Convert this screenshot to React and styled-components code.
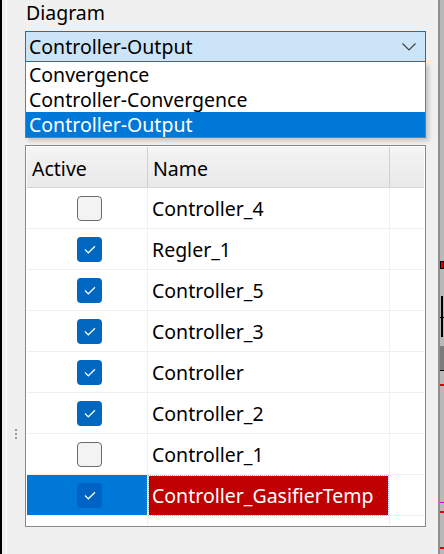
import React from 'react'
import styled, { createGlobalStyle } from 'styled-components'

const GlobalStyle = createGlobalStyle`
  html, body {
    margin: 0;
    padding: 0;
    background: #f0f0f0;
    overflow: hidden;
  }
  body {
    font-family: "Noto Sans", "Open Sans", sans-serif;
    font-size: 19.5px;
    color: #000;
  }
`

const Window = styled.div`
  display: flex;
  width: 444px;
  height: 554px;
`

const LeftRail = styled.div`
  width: 20px;
  flex-shrink: 0;
  border-left: 2px solid #000;
  box-sizing: border-box;
  display: flex;
  flex-direction: column;
  align-items: center;
  padding: 429px 0 0 2px;
  box-shadow: inset 4px 0 0 #f0f0f0, inset 5px 0 0 #fbfbfb;
`

const Grip = styled.div`
  display: flex;
  flex-direction: column;
  gap: 2px;
  margin-left: 8px;

  span {
    width: 2px;
    height: 2px;
    background: #9a9a9a;
  }
`

const Panel = styled.div`
  position: relative;
  width: 401px;
  margin-left: 5px;
  flex-shrink: 0;
  display: flex;
  flex-direction: column;
`

const Label = styled.div`
  height: 31px;
  line-height: 26px;
  padding-left: 1px;
`

const Combo = styled.div`
  height: 31px;
  box-sizing: border-box;
  border: 1px solid #0078d7;
  background: #cce4f7;
  display: flex;
  align-items: center;
  justify-content: space-between;
  padding: 0 9px 0 3px;
`

const Popup = styled.div`
  position: absolute;
  top: 62px;
  left: 0;
  width: 401px;
  box-sizing: border-box;
  background: #fff;
  border: 1px solid #7a7a7a;
  border-top: none;
  box-shadow: 3px 3px 4px rgba(0, 0, 0, 0.18);
  z-index: 2;
`

const Option = styled.div`
  height: 25px;
  line-height: 25px;
  padding-left: 3px;
  background: ${p => (p.$selected ? '#0078d7' : '#fff')};
  color: ${p => (p.$selected ? '#fff' : '#000')};
`

const Grid = styled.div`
  margin-top: 83px;
  height: 382px;
  box-sizing: border-box;
  border: 1px solid #828790;
  padding: 1px;
  background: #fff;
  display: flex;
  flex-direction: column;
`

const Row = styled.div`
  display: flex;
  height: ${p => (p.$fill ? 'auto' : '41px')};
  flex: ${p => (p.$fill ? '1' : 'none')};
  box-sizing: border-box;
  border-bottom: ${p => (p.$fill ? 'none' : '1px solid #f0f0f0')};
`

const HeaderRow = styled.div`
  display: flex;
  height: 41px;
  box-sizing: border-box;
  border-bottom: 1px solid #d5d5d5;
  background: linear-gradient(#f4f4f4, #e9e9e9);
`

const HeadCell = styled.div`
  width: ${p => p.$w}px;
  flex: ${p => (p.$w ? 'none' : '1')};
  box-sizing: border-box;
  border-right: ${p => (p.$last ? 'none' : '1px solid #d0d0d0')};
  display: flex;
  align-items: center;
  padding-left: 5px;
  padding-top: 2px;
`

const ActiveCell = styled.div`
  width: 121px;
  flex: none;
  box-sizing: border-box;
  border-right: 1px solid #f0f0f0;
  background: ${p => (p.$selected ? '#0078d7' : 'transparent')};
  display: flex;
  align-items: center;
  justify-content: center;
  padding-left: 5px;
`

const NameCell = styled.div`
  width: 242px;
  flex: none;
  box-sizing: border-box;
  border-right: 1px solid #f0f0f0;
  display: flex;
  align-items: center;
  padding: ${p => (p.$selected ? '1px 1px 0 1px' : '0 0 0 4px')};
`

const Editor = styled.div`
  flex: 1;
  align-self: stretch;
  background: #c00000;
  color: #fff;
  outline: 1px dotted #8fc3ee;
  outline-offset: 0;
  display: flex;
  align-items: center;
  padding-left: 3px;
`

const FillCell = styled.div`
  flex: 1;
`

const Box = styled.div`
  width: 25px;
  height: 25px;
  box-sizing: border-box;
  border-radius: 4px;
  display: flex;
  align-items: center;
  justify-content: center;
  border: ${p => (p.$checked ? 'none' : '1.5px solid #6b6b6b')};
  background: ${p => (p.$checked ? (p.$selected ? '#0062c4' : '#0067c0') : '#f3f3f3')};
`

const Gutter = styled.div`
  width: 12px;
  flex-shrink: 0;
`

const Splitter = styled.div`
  width: 2px;
  flex-shrink: 0;
  background: #8e8e8e;
`

const Canvas = styled.div`
  position: relative;
  flex: 1;
  background: #b9b9b9;
`

const Mark = styled.div`
  position: absolute;
  left: 0;
  right: 0;
  box-sizing: border-box;
`

const Chevron = () => (
  <svg width="14" height="8" viewBox="0 0 14 8">
    <path d="M0.5 0.5 L7 7 L13.5 0.5" fill="none" stroke="#3c3c3c" strokeWidth="1.1" />
  </svg>
)

const Check = () => (
  <svg width="12" height="9" viewBox="0 0 12 9">
    <path d="M1 4.5 L4.3 7.8 L11 1.2" fill="none" stroke="#fff" strokeWidth="1.2" />
  </svg>
)

const options = ['Convergence', 'Controller-Convergence', 'Controller-Output']

const controllers = [
  { name: 'Controller_4', active: false },
  { name: 'Regler_1', active: true },
  { name: 'Controller_5', active: true },
  { name: 'Controller_3', active: true },
  { name: 'Controller', active: true },
  { name: 'Controller_2', active: true },
  { name: 'Controller_1', active: false },
  { name: 'Controller_GasifierTemp', active: true, selected: true },
]

export default function App() {
  return (
    <>
      <GlobalStyle />
      <Window>
        <LeftRail>
          <Grip>
            <span />
            <span />
            <span />
          </Grip>
        </LeftRail>

        <Panel>
          <Label>Diagram</Label>
          <Combo>
            <span>Controller-Output</span>
            <Chevron />
          </Combo>
          <Popup>
            {options.map(o => (
              <Option key={o} $selected={o === 'Controller-Output'}>
                {o}
              </Option>
            ))}
          </Popup>

          <Grid>
            <HeaderRow>
              <HeadCell $w={121}>Active</HeadCell>
              <HeadCell $w={242}>Name</HeadCell>
              <HeadCell $last />
            </HeaderRow>
            {controllers.map(c => (
              <Row key={c.name}>
                <ActiveCell $selected={c.selected}>
                  <Box $checked={c.active} $selected={c.selected}>
                    {c.active && <Check />}
                  </Box>
                </ActiveCell>
                <NameCell $selected={c.selected}>
                  {c.selected ? <Editor>{c.name}</Editor> : c.name}
                </NameCell>
                <FillCell />
              </Row>
            ))}
            <Row $fill>
              <ActiveCell />
              <NameCell />
              <FillCell />
            </Row>
          </Grid>
        </Panel>

        <Gutter />
        <Splitter />
        <Canvas>
          <Mark style={{ top: 264, height: 1, background: '#e000e0' }} />
          <Mark style={{ top: 261, height: 8, background: '#e00000', border: '1px solid #000' }} />
          <Mark style={{ top: 296, height: 41, width: 2, background: '#000', left: 1 }} />
          <Mark style={{ top: 317, height: 1, background: '#000' }} />
          <Mark style={{ top: 346, height: 25, background: '#7c7c7c', borderBottom: '1px solid #000' }} />
          <Mark style={{ top: 384, height: 2, background: '#e00000' }} />
          <Mark style={{ top: 502, height: 1, background: '#e000e0' }} />
          <Mark style={{ top: 511, height: 2, background: '#e00000' }} />
          <Mark style={{ top: 547, height: 2, background: '#e00000' }} />
        </Canvas>
      </Window>
    </>
  )
}
